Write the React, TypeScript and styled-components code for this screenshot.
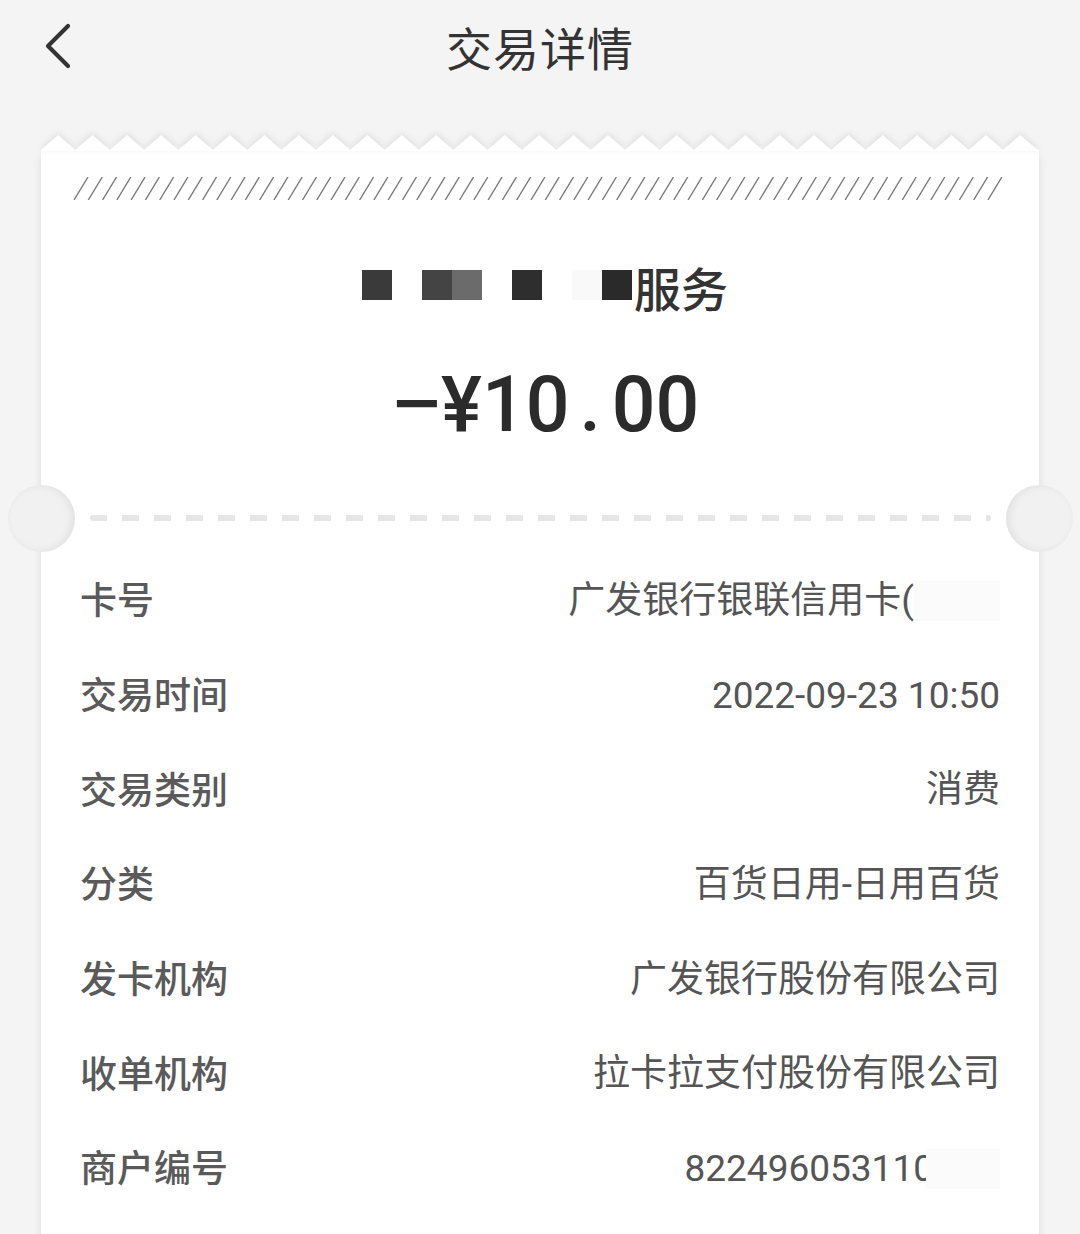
import React from 'react';
import styled, { createGlobalStyle } from 'styled-components';

const GlobalStyle = createGlobalStyle`
  body {
    margin: 0;
    background: #f4f4f4;
    font-family: Roboto, "Noto Sans CJK SC", sans-serif;
  }
`;

interface DetailRow {
  label: string;
  value: string;
  masked?: number; // width of the blurred tail, if any
  overlap?: number;
}

const rows: DetailRow[] = [
  { label: '卡号', value: '广发银行银联信用卡(', masked: 86, overlap: 0 },
  { label: '交易时间', value: '2022-09-23 10:50' },
  { label: '交易类别', value: '消费' },
  { label: '分类', value: '百货日用-日用百货' },
  { label: '发卡机构', value: '广发银行股份有限公司' },
  { label: '收单机构', value: '拉卡拉支付股份有限公司' },
  { label: '商户编号', value: '822496053110', masked: 74, overlap: 8 },
];

// mosaic cells in front of the merchant name
const mosaic = ['#3a3a3a', '#ffffff', '#444444', '#6b6b6b', '#ffffff', '#2e2e2e', '#ffffff', '#f9f9f9', '#2a2a2a'];

const TEETH = 29;
const TOOTH = 34.36;

const teethPoints = () => {
  const pts: string[] = ['0,16', '0,15'];
  for (let i = 0; i < TEETH; i++) {
    const x = i * TOOTH;
    pts.push(`${x + TOOTH / 2},0`);
    if (i < TEETH - 1) pts.push(`${x + TOOTH},15`);
  }
  pts.push('998,16');
  return pts.join(' ');
};

const Hatch: React.FC = () => {
  const lines = [];
  for (let i = 0; i < 65; i++) {
    const x = 1 + i * 14.28;
    lines.push(<line key={i} x1={x} y1={23} x2={x + 14} y2={0} />);
  }
  return (
    <HatchSvg viewBox="0 0 930 23" preserveAspectRatio="none">
      <g stroke="#7a7a7a" strokeWidth={1.4}>{lines}</g>
    </HatchSvg>
  );
};

export default function App() {
  return (
    <>
      <GlobalStyle />
      <Page>
        <Header>
          <BackButton>
            <svg width="30" height="46" viewBox="0 0 30 46">
              <polyline
                points="24,3 4,23 24,43"
                fill="none"
                stroke="#333"
                strokeWidth={4.2}
                strokeLinecap="round"
                strokeLinejoin="round"
              />
            </svg>
          </BackButton>
          <Title>交易详情</Title>
        </Header>

        <Ticket>
          <Teeth viewBox="0 0 998 16" preserveAspectRatio="none">
            <polygon points={teethPoints()} fill="#fff" />
          </Teeth>
          <Body>
            <Hatch />
            <Merchant>
              <Mosaic>
                {mosaic.map((c, i) => (
                  <Cell key={i} color={c} />
                ))}
              </Mosaic>
              <MerchantName>服务</MerchantName>
            </Merchant>
            <Amount>
              <Minus>−</Minus>¥10<Dot>.</Dot>00
            </Amount>

            <Divider>
              <Notch side="left" />
              <Dashes />
              <Notch side="right" />
            </Divider>

            <List>
              {rows.map((row) => (
                <Row key={row.label}>
                  <Label>{row.label}</Label>
                  <Value>
                    {row.value}
                    {row.masked && (
                      <Mask style={{ width: row.masked, marginLeft: -(row.overlap ?? 0) }} />
                    )}
                  </Value>
                </Row>
              ))}
            </List>
          </Body>
        </Ticket>
      </Page>
    </>
  );
}

const Page = styled.div`
  width: 1080px;
  min-height: 1234px;
  background: #f4f4f4;
  overflow: hidden;
`;

const Header = styled.div`
  position: relative;
  height: 94px;
  display: flex;
  align-items: center;
  justify-content: center;
`;

const BackButton = styled.div`
  position: absolute;
  left: 44px;
  top: 23px;
  display: flex;
`;

const Title = styled.div`
  font-size: 46px;
  line-height: 46px;
  color: #333;
  font-family: "Noto Sans CJK SC", sans-serif;
  letter-spacing: 1px;
  margin-bottom: 2px;
`;

const Ticket = styled.div`
  margin: 41px 41px 0;
`;

const Teeth = styled.svg`
  display: block;
  width: 100%;
  height: 16px;
  margin-bottom: -1px;
  filter: drop-shadow(0 -2px 3px rgba(0, 0, 0, 0.09));
`;

const Body = styled.div`
  background: #fff;
  padding-top: 27px;
  box-shadow: -5px 0 8px -5px rgba(0, 0, 0, 0.1), 5px 0 8px -5px rgba(0, 0, 0, 0.1);
  min-height: 1100px;
`;

const HatchSvg = styled.svg`
  display: block;
  width: 930px;
  height: 23px;
  margin-left: 32px;
`;

const Merchant = styled.div`
  margin-top: 62px;
  height: 56px;
  display: flex;
  justify-content: center;
  align-items: flex-start;
  padding-left: 10px;
`;

const Mosaic = styled.div`
  display: flex;
  margin-top: 8px;
`;

const Cell = styled.div<{ color: string }>`
  width: 30px;
  height: 30px;
  background: ${(p) => p.color};
`;

const MerchantName = styled.div`
  font-family: "Noto Sans CJK SC", sans-serif;
  font-size: 47px;
  font-weight: 500;
  line-height: 46px;
  color: #333;
  margin-left: 2px;
  margin-top: 2px;
`;

const Amount = styled.div`
  margin-top: 42px;
  height: 90px;
  display: flex;
  justify-content: center;
  align-items: center;
  font-family: Roboto, sans-serif;
  font-size: 77px;
  font-weight: 500;
  color: #2b2b2b;
  padding-left: 14px;
`;

const Minus = styled.span`
  display: inline-block;
  transform: scaleX(1.25);
  margin-right: 3px;
`;

const Dot = styled.span`
  margin: 0 11px 0 10px;
`;

const Divider = styled.div`
  position: relative;
  margin-top: 35px;
  height: 66px;
  display: flex;
  align-items: center;
  padding: 0 48px 0 49px;
`;

const Dashes = styled.div`
  flex: 1;
  height: 6px;
  border-radius: 3px;
  background-image: repeating-linear-gradient(
    to right,
    #e6e6e6 0,
    #e6e6e6 17px,
    transparent 17px,
    transparent 32px
  );
`;

const Notch = styled.div<{ side: 'left' | 'right' }>`
  position: absolute;
  top: 0;
  ${(p) => (p.side === 'left' ? 'left: -33px;' : 'right: -34px;')}
  width: 67px;
  height: 67px;
  border-radius: 50%;
  background: #f1f1f1;
  box-shadow: inset ${(p) => (p.side === 'left' ? '-3px' : '3px')} 0 8px rgba(0, 0, 0, 0.07);
`;

const List = styled.div`
  display: flex;
  flex-direction: column;
  padding: 0 39px 0 39px;
`;

const Row = styled.div`
  height: 94.7px;
  display: flex;
  align-items: center;
  justify-content: space-between;
`;

const Label = styled.div`
  font-family: "Noto Sans CJK SC", sans-serif;
  font-size: 37px;
  font-weight: 500;
  color: #5a5a5a;
`;

const Value = styled.div`
  display: flex;
  align-items: center;
  font-family: Roboto, "Noto Sans CJK SC", sans-serif;
  font-size: 37px;
  line-height: 44px;
  color: #555;
  padding-top: 5px;
`;

const Mask = styled.span`
  display: inline-block;
  height: 40px;
  background: #fbfbfb;
`;
